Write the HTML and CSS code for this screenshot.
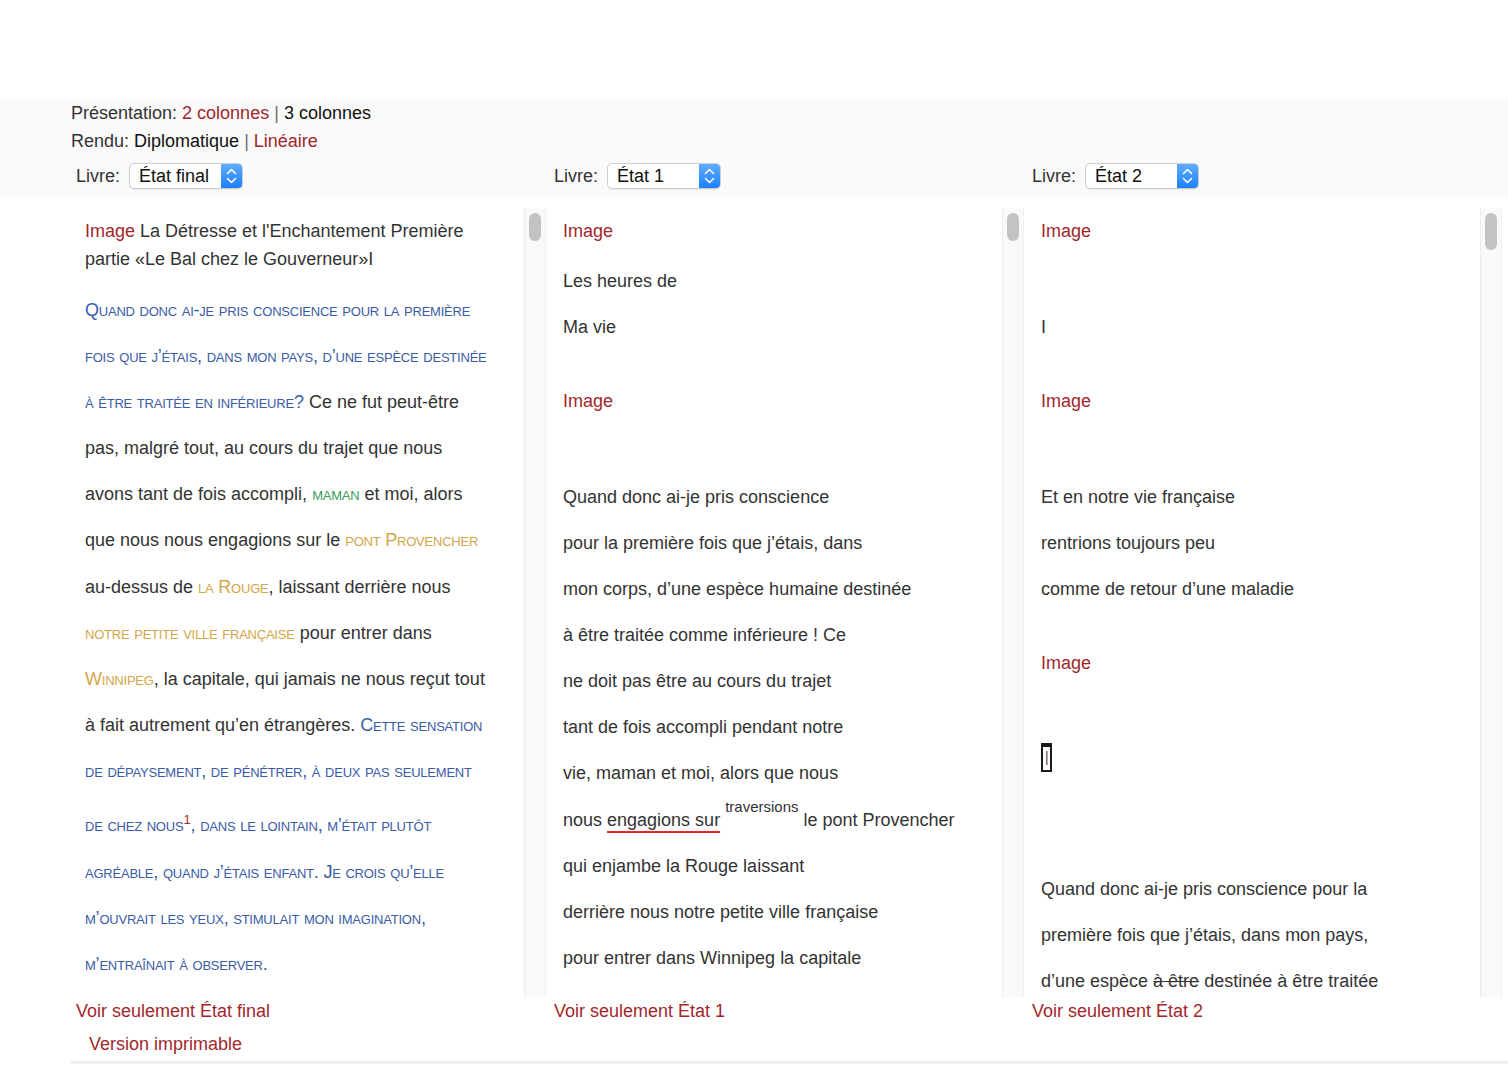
FILE: index.html
```html
<!DOCTYPE html>
<html lang="fr">
<head>
<meta charset="utf-8">
<title>Livre</title>
<link rel="stylesheet" href="styles.css">
</head>
<body>
<header class="topbar">
  <div class="opts">
    <div class="opt">Présentation: <a class="lnk">2 colonnes</a> <span class="sep">|</span> <span class="cur">3 colonnes</span></div>
    <div class="opt">Rendu: <span class="cur">Diplomatique</span> <span class="sep">|</span> <a class="lnk">Linéaire</a></div>
  </div>
  <div class="cols livres">
    <div class="livre"><span class="lbl">Livre:</span>
      <div class="select"><span class="val">État final</span><span class="step"><svg width="22" height="26" viewBox="0 0 22 26"><path d="M6.5 10.5 L10.5 6.5 L14.5 10.5" fill="none" stroke="#fff" stroke-width="1.6" stroke-linecap="round" stroke-linejoin="round"/><path d="M6.5 15.5 L10.5 19.5 L14.5 15.5" fill="none" stroke="#fff" stroke-width="1.6" stroke-linecap="round" stroke-linejoin="round"/></svg></span></div>
    </div>
    <div class="livre"><span class="lbl">Livre:</span>
      <div class="select"><span class="val">État 1</span><span class="step"><svg width="22" height="26" viewBox="0 0 22 26"><path d="M6.5 10.5 L10.5 6.5 L14.5 10.5" fill="none" stroke="#fff" stroke-width="1.6" stroke-linecap="round" stroke-linejoin="round"/><path d="M6.5 15.5 L10.5 19.5 L14.5 15.5" fill="none" stroke="#fff" stroke-width="1.6" stroke-linecap="round" stroke-linejoin="round"/></svg></span></div>
    </div>
    <div class="livre"><span class="lbl">Livre:</span>
      <div class="select"><span class="val">État 2</span><span class="step"><svg width="22" height="26" viewBox="0 0 22 26"><path d="M6.5 10.5 L10.5 6.5 L14.5 10.5" fill="none" stroke="#fff" stroke-width="1.6" stroke-linecap="round" stroke-linejoin="round"/><path d="M6.5 15.5 L10.5 19.5 L14.5 15.5" fill="none" stroke="#fff" stroke-width="1.6" stroke-linecap="round" stroke-linejoin="round"/></svg></span></div>
    </div>
  </div>
</header>

<main class="cols panes">
  <section class="pane">
    <div class="text c1">
      <p class="head"><span class="red">Image</span> La Détresse et l'Enchantement Première<br>partie «Le Bal chez le Gouverneur»I</p>
      <div class="l first"><span class="sc blue">Quand donc ai-je pris conscience pour la première</span></div>
      <div class="l"><span class="sc blue">fois que j’étais, dans mon pays, d’une espèce destinée</span></div>
      <div class="l"><span class="sc blue">à être traitée en inférieure</span><span class="blue">?</span> Ce ne fut peut-être</div>
      <div class="l">pas, malgré tout, au cours du trajet que nous</div>
      <div class="l">avons tant de fois accompli, <span class="sc green">maman</span> et moi, alors</div>
      <div class="l">que nous nous engagions sur le <span class="sc gold">pont Provencher</span></div>
      <div class="l">au-dessus de <span class="sc gold">la Rouge</span>, laissant derrière nous</div>
      <div class="l"><span class="sc gold">notre petite ville française</span> pour entrer dans</div>
      <div class="l"><span class="sc gold">Winnipeg</span>, la capitale, qui jamais ne nous reçut tout</div>
      <div class="l">à fait autrement qu’en étrangères. <span class="sc blue">Cette sensation</span></div>
      <div class="l"><span class="sc blue">de dépaysement, de pénétrer, à deux pas seulement</span></div>
      <div class="l l-sup"><span class="sc blue">de chez nous<sup class="note">1</sup>, dans le lointain, m’était plutôt</span></div>
      <div class="l"><span class="sc blue">agréable, quand j’étais enfant. Je crois qu’elle</span></div>
      <div class="l"><span class="sc blue">m’ouvrait les yeux, stimulait mon imagination,</span></div>
      <div class="l"><span class="sc blue">m’entraînait à observer.</span></div>
    </div>
    <div class="bar"><div class="thumb"></div></div>
  </section>

  <section class="pane">
    <div class="text c2">
      <div class="l red">Image</div>
      <div class="l g4">Les heures de</div>
      <div class="l">Ma vie</div>
      <div class="l red g28">Image</div>
      <div class="l g50">Quand donc ai-je pris conscience</div>
      <div class="l">pour la première fois que j’étais, dans</div>
      <div class="l">mon corps, d’une espèce humaine destinée</div>
      <div class="l">à être traitée comme inférieure ! Ce</div>
      <div class="l">ne doit pas être au cours du trajet</div>
      <div class="l">tant de fois accompli pendant notre</div>
      <div class="l">vie, maman et moi, alors que nous</div>
      <div class="l g1">nous <span class="uline">engagions sur</span> <span class="add">traversions</span> le pont Provencher</div>
      <div class="l">qui enjambe la Rouge laissant</div>
      <div class="l">derrière nous notre petite ville française</div>
      <div class="l">pour entrer dans Winnipeg la capitale</div>
    </div>
    <div class="bar"><div class="thumb"></div></div>
  </section>

  <section class="pane">
    <div class="text c3">
      <div class="l red">Image</div>
      <div class="l g50">I</div>
      <div class="l red g28">Image</div>
      <div class="l g50">Et en notre vie française</div>
      <div class="l">rentrions toujours peu</div>
      <div class="l">comme de retour d’une maladie</div>
      <div class="l red g28">Image</div>
      <div class="l g48 boxline"><span class="caret"><span class="caret-in"></span></span></div>
      <div class="l g86">Quand donc ai-je pris conscience pour la</div>
      <div class="l">première fois que j’étais, dans mon pays,</div>
      <div class="l">d’une espèce <span class="del">à être</span> destinée à être traitée</div>
    </div>
    <div class="bar"><div class="thumb tall"></div></div>
  </section>
</main>

<footer class="foot">
  <div class="cols">
    <a class="lnk">Voir seulement État final</a>
    <a class="lnk">Voir seulement État 1</a>
    <a class="lnk">Voir seulement État 2</a>
  </div>
  <a class="lnk print">Version imprimable</a>
  <div class="rule"></div>
</footer>
</body>
</html>
```
FILE: styles.css
```css
html, body {
  margin: 0;
  padding: 0;
  background: #ffffff;
}
body {
  font-family: "Liberation Sans", Arial, Helvetica, sans-serif;
  font-size: 18px;
  color: #333333;
  padding-top: 99px;
}
.topbar {
  background: #fafafa;
}
.opts {
  padding-left: 71px;
}
.opt {
  line-height: 28px;
  height: 28px;
  white-space: nowrap;
}
.lnk {
  color: #a1272c;
  text-decoration: none;
  cursor: pointer;
}
.cur {
  color: #111111;
}
.sep {
  color: #6e6e6e;
}
.cols {
  display: grid;
  grid-template-columns: 470px 470px 470px;
  column-gap: 8px;
  padding-left: 76px;
}
.livres {
  height: 41px;
  align-items: center;
}
.livre {
  display: flex;
  align-items: center;
  padding-top: 1px;
}
.lbl {
  color: #333;
  margin-right: 9px;
}
.select {
  display: flex;
  align-items: center;
  width: 114px;
  height: 26px;
  box-sizing: border-box;
  border: 1px solid #cdcdcd;
  border-radius: 5px;
  background: #ffffff;
  box-shadow: 0 1px 1px rgba(0,0,0,0.06);
  overflow: hidden;
}
.val {
  flex: 1;
  padding-left: 9px;
  color: #111;
  font-size: 18px;
  line-height: 24px;
}
.step {
  width: 22px;
  height: 26px;
  margin-top: -1px;
  margin-bottom: -1px;
  margin-right: -1px;
  background: linear-gradient(#62adff, #1a80fa);
  border-radius: 0 5px 5px 0;
  display: flex;
}
.panes {
  margin-top: 12px;
}
.pane {
  display: flex;
  height: 789px;
}
.text {
  flex: 1;
  overflow: hidden;
  padding-left: 9px;
  white-space: nowrap;
}
.bar {
  width: 22px;
  box-sizing: border-box;
  background: #f9f9f9;
  border-left: 1px solid #ececec;
  border-right: 1px solid #f1f1f1;
  padding-top: 5px;
  display: flex;
  justify-content: center;
  align-items: flex-start;
}
.thumb {
  width: 12px;
  height: 28px;
  border-radius: 6px;
  background: #c3c3c3;
}
.thumb.tall {
  height: 37px;
}
.head {
  margin: 9px 0 0 0;
  line-height: 28px;
}
.l {
  height: 46px;
  line-height: 46px;
}
.c1 .l {
  height: 46.1px;
}
.l.first {
  margin-top: 14px;
}
.l.l-sup {
  height: auto;
  margin-top: 3px;
  margin-bottom: 1px;
}
.red {
  color: #a1272c;
}
.sc {
  font-variant: small-caps;
  letter-spacing: -0.22px;
}
.blue {
  color: #3a5ca6;
}
.green {
  color: #3a9a5c;
}
.gold {
  color: #d3a64a;
}
.note {
  color: #a1272c;
  font-size: 13px;
  font-variant: normal;
  letter-spacing: 0;
}
.g1 { margin-top: 1px; }
.g4 { margin-top: 4px; }
.g28 { margin-top: 28px; }
.g48 { margin-top: 48px; }
.g50 { margin-top: 50px; }
.g86 { margin-top: 86px; }
.uline {
  text-decoration: underline;
  text-decoration-color: #e8282b;
  text-decoration-thickness: 2px;
  text-underline-offset: 5px;
}
.add {
  font-size: 15px;
  line-height: 15px;
  vertical-align: 14px;
}
.del {
  text-decoration: line-through;
  text-decoration-color: #333;
}
.boxline {
  display: flex;
  align-items: center;
}
.caret {
  display: flex;
  justify-content: center;
  align-items: center;
  width: 11px;
  height: 29px;
  box-sizing: border-box;
  border: 2px solid #1a1a1a;
  border-top-width: 4px;
  background: #fff;
}
.caret-in {
  width: 2px;
  height: 14px;
  background: linear-gradient(90deg, #a66f45 50%, #8fb4d8 50%);
}
.foot .cols {
  line-height: 28px;
}
.print {
  display: block;
  margin-top: 5px;
  padding-left: 89px;
  line-height: 28px;
}
.rule {
  margin-top: 3px;
  margin-left: 71px;
  height: 3px;
  background: #ededed;
}
```
